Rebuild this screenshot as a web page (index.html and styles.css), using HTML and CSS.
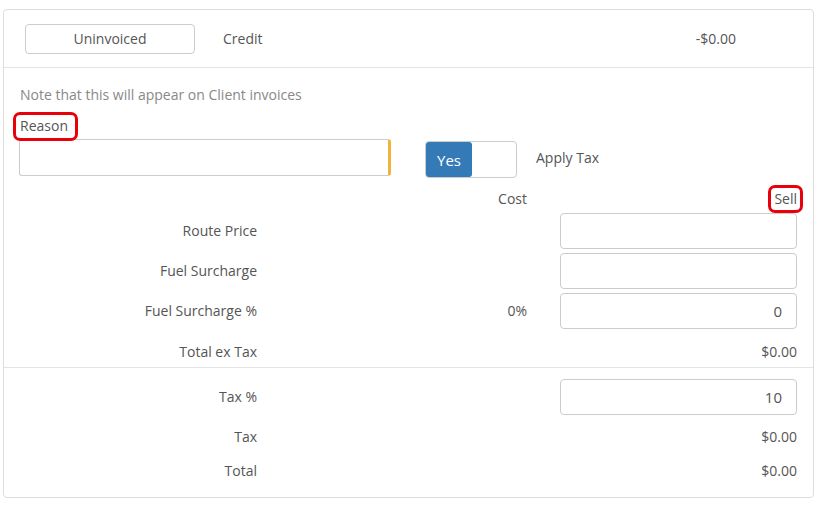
FILE: index.html
```
<!DOCTYPE html>
<html lang="en">
<head>
    <meta charset="UTF-8" />
    <title>Credit</title>
    <link rel="stylesheet" href="styles.css">
</head>
<body>

    <div class="kart">
        <div class="ust-satir">
            <button class="durum-btn">Uninvoiced</button>
            <span class="tip">Credit</span>
            <span class="tutar">-$0.00</span>
        </div>

        <div class="govde">
            <p class="not">Note that this will appear on Client invoices</p>

            <div class="neden-satir">
                <div class="neden-kutu">
                    <label class="neden-etiket"><span class="isaret">Reason</span></label>
                    <input type="text" class="neden-input" />
                </div>
                <div class="vergi">
                    <div class="anahtar">
                        <span class="anahtar-evet">Yes</span>
                    </div>
                    <span class="vergi-yazi">Apply Tax</span>
                </div>
            </div>

            <div class="fiyat-tablo">
                <span></span>
                <span class="baslik">Cost</span>
                <span class="baslik"><span class="isaret isaret-sell">Sell</span></span>

                <span class="etiket">Route Price</span>
                <span></span>
                <input type="text" class="fiyat-input" />

                <span class="etiket">Fuel Surcharge</span>
                <span></span>
                <input type="text" class="fiyat-input" />

                <span class="etiket">Fuel Surcharge %</span>
                <span class="deger">0%</span>
                <input type="text" class="fiyat-input" value="0" />

                <span class="etiket satir-toplam">Total ex Tax</span>
                <span class="satir-toplam"></span>
                <span class="deger satir-toplam">$0.00</span>
            </div>
        </div>

        <div class="alt">
            <div class="fiyat-tablo">
                <span class="etiket">Tax %</span>
                <span></span>
                <input type="text" class="fiyat-input" value="10" />

                <span class="etiket satir-vergi">Tax</span>
                <span class="satir-vergi"></span>
                <span class="deger satir-vergi">$0.00</span>

                <span class="etiket satir-son">Total</span>
                <span class="satir-son"></span>
                <span class="deger satir-son">$0.00</span>
            </div>
        </div>
    </div>

</body>
</html>
```

FILE: styles.css
```
body {
    margin: 0;
    font-family: "Open Sans", Arial, sans-serif;
    font-size: 14px;
    line-height: 20px;
    color: #555;
    background: #fff;
}

.kart {
    margin: 9px 0 0 3px;
    width: 811px;
    height: 489px;
    box-sizing: border-box;
    border: 1px solid #ddd;
    border-radius: 4px;
}

/* ust satir */
.ust-satir {
    display: flex;
    align-items: center;
    height: 57px;
    padding-left: 21px;
    border-bottom: 1px solid #e3e3e3;
}

.durum-btn {
    width: 170px;
    height: 30px;
    padding: 0;
    font-family: inherit;
    font-size: 14px;
    color: #555;
    background: #fff;
    border: 1px solid #ccc;
    border-radius: 4px;
}

.tip {
    margin-left: 28px;
}

.tutar {
    margin-left: auto;
    margin-right: 77px;
}

/* govde */
.govde {
    padding: 17px 16px 5px 15px;
}

.not {
    margin: 0;
    padding-left: 1px;
    color: #888;
}

.neden-satir {
    display: flex;
    align-items: flex-end;
    margin-top: 11px;
}

.neden-kutu {
    width: 372px;
}

.neden-etiket {
    display: block;
    padding-left: 1px;
    margin-bottom: 3px;
}

.isaret {
    position: relative;
    display: inline-block;
}

    .isaret::after {
        content: "";
        position: absolute;
        top: -4px;
        bottom: -5px;
        left: -7px;
        right: -10px;
        border: 3px solid #e8000b;
        border-radius: 7px;
    }

.isaret-sell::after {
    top: -4px;
    bottom: -4px;
    left: -6px;
    right: -6px;
}

.neden-input {
    display: block;
    width: 100%;
    height: 37px;
    box-sizing: border-box;
    border: 1px solid #ccc;
    border-right: 3px solid #f0b43c;
    border-radius: 3px;
    outline: none;
}

.vergi {
    display: flex;
    align-items: center;
    margin-left: 34px;
    margin-bottom: -2px;
}

.anahtar {
    width: 92px;
    height: 37px;
    box-sizing: border-box;
    border: 1px solid #ccc;
    border-radius: 4px;
    display: flex;
    align-items: stretch;
}

.anahtar-evet {
    width: 46px;
    background: #337ab7;
    color: #fff;
    font-size: 15px;
    border-radius: 3px;
    display: flex;
    align-items: center;
    justify-content: center;
}

.vergi-yazi {
    margin-left: 19px;
    margin-bottom: 4px;
}

/* fiyat tablosu */
.fiyat-tablo {
    display: grid;
    grid-template-columns: 238px 1fr 237px;
    column-gap: 33px;
    row-gap: 4px;
    align-items: center;
}

.govde .fiyat-tablo {
    margin-top: 13px;
}

.etiket,
.baslik,
.deger {
    text-align: right;
}

.fiyat-input {
    height: 36px;
    box-sizing: border-box;
    border: 1px solid #ccc;
    border-radius: 4px;
    padding: 0 14px;
    font-family: inherit;
    font-size: 15px;
    color: #555;
    text-align: right;
    outline: none;
}

.satir-toplam {
    margin-top: 9px;
}

.alt {
    border-top: 1px solid #e3e3e3;
    padding: 11px 16px 0 15px;
}

.satir-vergi {
    margin-top: 8px;
}

.satir-son {
    margin-top: 10px;
}
```
